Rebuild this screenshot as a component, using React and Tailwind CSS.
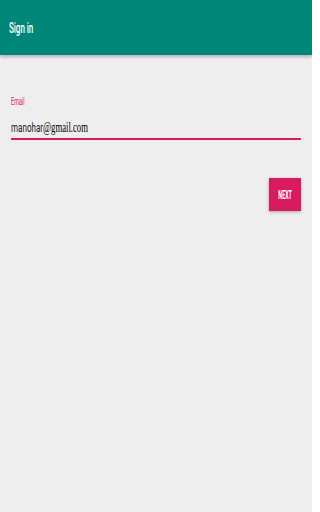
import React from "react";

export default function App() {
  return (
    <div className="w-[312px] h-[512px] bg-[#eeeeee] font-['Roboto',sans-serif] overflow-hidden">
      <div className="h-[55px] bg-[#00877a] flex items-center px-[9px] shadow-[0_2px_3px_rgba(0,0,0,0.25)]">
        <span className="block origin-left scale-x-[0.57] text-[14px] leading-[16px] font-medium text-white whitespace-nowrap">
          Sign in
        </span>
      </div>

      <div className="px-[11px] pt-[42px]">
        <div className="h-[10px] text-[10px] leading-[10px] text-[#d81b60]">
          <span className="block origin-left scale-x-[0.55] whitespace-nowrap">Email</span>
        </div>

        <div className="mt-[13px] h-[20px] border-b-2 border-[#d81b60] text-[13px] leading-[16px]">
          <span className="block origin-left scale-x-[0.62] text-[#222] whitespace-nowrap">
            manohar
            <span className="font-['Liberation_Serif',serif] text-[14px] text-black">@gmail.com</span>
          </span>
        </div>

        <div className="mt-[38px] flex justify-end">
          <button className="w-[32px] h-[33px] bg-[#d81b60] flex items-center justify-center shadow-[0_1px_3px_rgba(0,0,0,0.3)]">
            <span className="block scale-x-[0.45] text-[12px] leading-[12px] font-bold text-white">
              NEXT
            </span>
          </button>
        </div>
      </div>
    </div>
  );
}
